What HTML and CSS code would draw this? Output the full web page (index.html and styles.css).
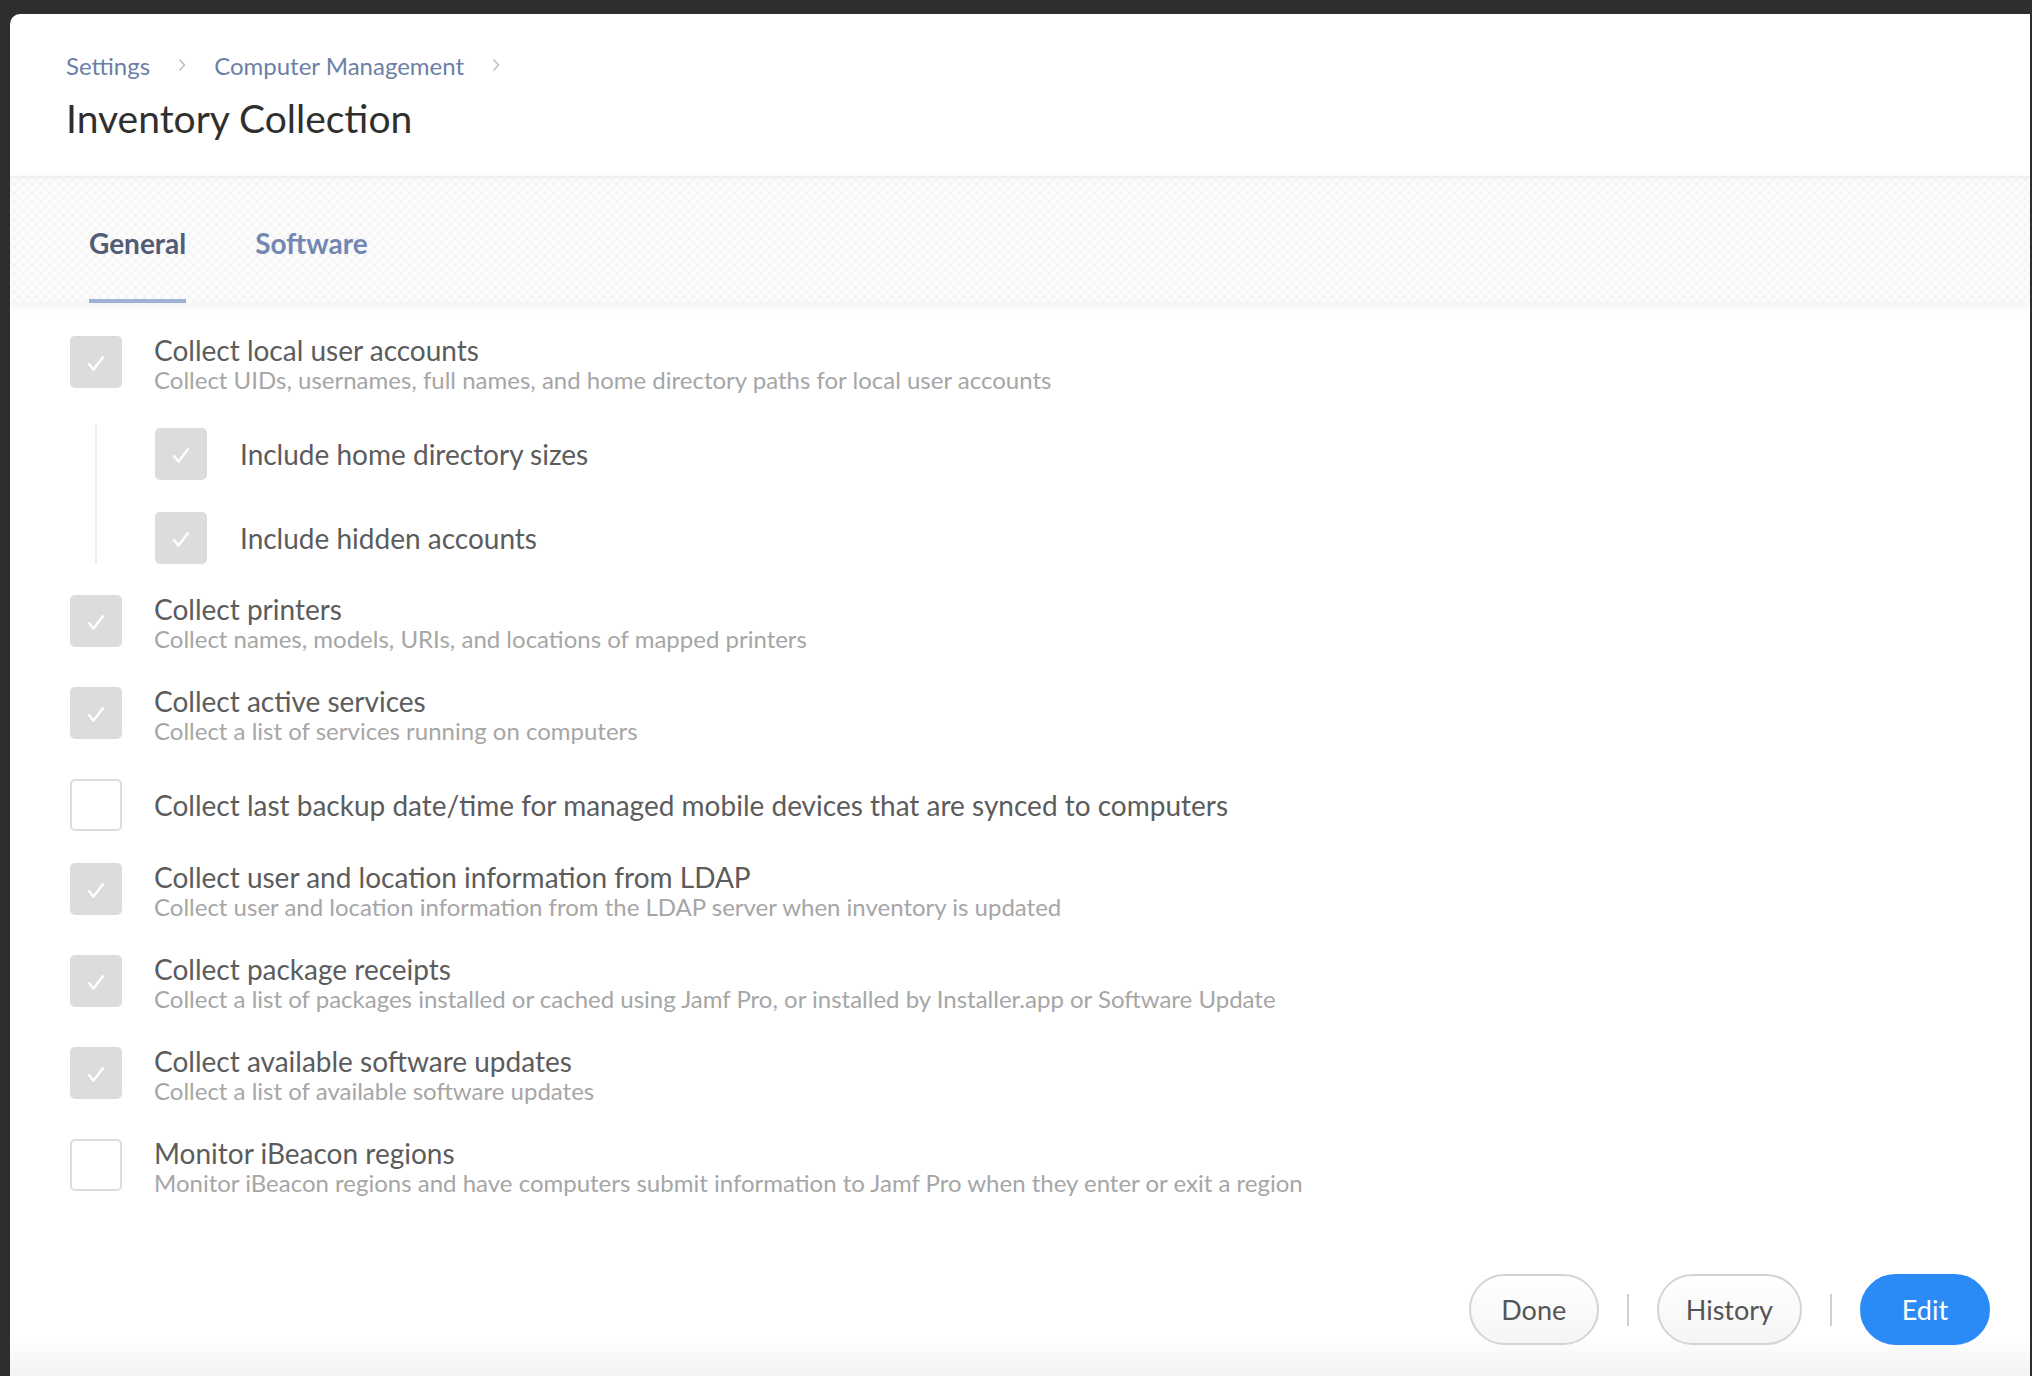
FILE: index.html
```html
<!DOCTYPE html>
<html lang="en">
<head>
  <meta charset="UTF-8">
  <title>Inventory Collection</title>
  <link rel="stylesheet" href="styles.css">
</head>
<body>
  <div class="page">
    <div class="header">
      <div class="breadcrumb">
        <a class="crumb">Settings</a>
        <svg class="chevron" width="8" height="14" viewBox="0 0 8 14"><path d="M1.5 1.5 L6.5 7 L1.5 12.5" fill="none" stroke="#b9bcc4" stroke-width="1.4"/></svg>
        <a class="crumb">Computer Management</a>
        <svg class="chevron" width="8" height="14" viewBox="0 0 8 14"><path d="M1.5 1.5 L6.5 7 L1.5 12.5" fill="none" stroke="#b9bcc4" stroke-width="1.4"/></svg>
      </div>
      <h1 class="title">Inventory Collection</h1>
    </div>

    <div class="tabs">
      <div class="tab active">General</div>
      <div class="tab">Software</div>
    </div>

    <div class="content">
      <div class="option">
        <span class="check on"><svg width="18" height="16" viewBox="0 0 18 16"><path d="M1.5 8.5 L6.5 14.5 L16.5 1.5" fill="none" stroke="#fff" stroke-width="2.4"/></svg></span>
        <div class="text">
          <div class="label">Collect local user accounts</div>
          <div class="desc">Collect UIDs, usernames, full names, and home directory paths for local user accounts</div>
        </div>
      </div>

      <div class="sub-options">
        <div class="option single">
          <span class="check on"><svg width="18" height="16" viewBox="0 0 18 16"><path d="M1.5 8.5 L6.5 14.5 L16.5 1.5" fill="none" stroke="#fff" stroke-width="2.4"/></svg></span>
          <div class="label sub">Include home directory sizes</div>
        </div>
        <div class="option single">
          <span class="check on"><svg width="18" height="16" viewBox="0 0 18 16"><path d="M1.5 8.5 L6.5 14.5 L16.5 1.5" fill="none" stroke="#fff" stroke-width="2.4"/></svg></span>
          <div class="label sub">Include hidden accounts</div>
        </div>
      </div>

      <div class="option">
        <span class="check on"><svg width="18" height="16" viewBox="0 0 18 16"><path d="M1.5 8.5 L6.5 14.5 L16.5 1.5" fill="none" stroke="#fff" stroke-width="2.4"/></svg></span>
        <div class="text">
          <div class="label">Collect printers</div>
          <div class="desc">Collect names, models, URIs, and locations of mapped printers</div>
        </div>
      </div>

      <div class="option">
        <span class="check on"><svg width="18" height="16" viewBox="0 0 18 16"><path d="M1.5 8.5 L6.5 14.5 L16.5 1.5" fill="none" stroke="#fff" stroke-width="2.4"/></svg></span>
        <div class="text">
          <div class="label">Collect active services</div>
          <div class="desc">Collect a list of services running on computers</div>
        </div>
      </div>

      <div class="option single">
        <span class="check"></span>
        <div class="label">Collect last backup date/time for managed mobile devices that are synced to computers</div>
      </div>

      <div class="option">
        <span class="check on"><svg width="18" height="16" viewBox="0 0 18 16"><path d="M1.5 8.5 L6.5 14.5 L16.5 1.5" fill="none" stroke="#fff" stroke-width="2.4"/></svg></span>
        <div class="text">
          <div class="label">Collect user and location information from LDAP</div>
          <div class="desc">Collect user and location information from the LDAP server when inventory is updated</div>
        </div>
      </div>

      <div class="option">
        <span class="check on"><svg width="18" height="16" viewBox="0 0 18 16"><path d="M1.5 8.5 L6.5 14.5 L16.5 1.5" fill="none" stroke="#fff" stroke-width="2.4"/></svg></span>
        <div class="text">
          <div class="label">Collect package receipts</div>
          <div class="desc">Collect a list of packages installed or cached using Jamf Pro, or installed by Installer.app or Software Update</div>
        </div>
      </div>

      <div class="option">
        <span class="check on"><svg width="18" height="16" viewBox="0 0 18 16"><path d="M1.5 8.5 L6.5 14.5 L16.5 1.5" fill="none" stroke="#fff" stroke-width="2.4"/></svg></span>
        <div class="text">
          <div class="label">Collect available software updates</div>
          <div class="desc">Collect a list of available software updates</div>
        </div>
      </div>

      <div class="option">
        <span class="check"></span>
        <div class="text">
          <div class="label">Monitor iBeacon regions</div>
          <div class="desc">Monitor iBeacon regions and have computers submit information to Jamf Pro when they enter or exit a region</div>
        </div>
      </div>
    </div>

    <div class="footer">
      <button class="btn">Done</button>
      <span class="divider"></span>
      <button class="btn">History</button>
      <span class="divider"></span>
      <button class="btn primary">Edit</button>
    </div>
  </div>
</body>
</html>
```

FILE: styles.css
```css
html, body {
  height: 100%;
}
body {
  margin: 0;
  background-color: #2e2e2e;
  font-family: Lato, "Open Sans", Arial, sans-serif;
  overflow: hidden;
}
.page {
  margin: 14px 2px 0 10px;
  height: 1362px;
  background-color: #fff;
  border-top-left-radius: 10px;
  display: flex;
  flex-direction: column;
  overflow: hidden;
}

/* header */
.header {
  padding: 36px 56px 36px 56px;
  position: relative;
  z-index: 2;
  box-shadow: 0 1px 3px rgba(0, 0, 0, 0.08);
}
.breadcrumb {
  display: flex;
  align-items: center;
  height: 30px;
  gap: 28px;
}
.crumb {
  color: #6c7fa6;
  font-size: 24px;
}
.chevron {
  display: block;
}
.title {
  margin: 16px 0 0 0;
  font-size: 39px;
  line-height: 44px;
  font-weight: normal;
  color: #2f2f2f;
}

/* tabs */
.tabs {
  display: flex;
  gap: 69px;
  padding-left: 79px;
  height: 127px;
  position: relative;
  z-index: 1;
  background-color: #ececec;
  background-image:
    radial-gradient(circle at 45% 40%, #ffffff 0, #f9f9f9 3px, rgba(240,240,240,0) 4.5px),
    radial-gradient(circle at 45% 40%, #ffffff 0, #f9f9f9 3px, rgba(240,240,240,0) 4.5px);
  background-size: 9px 9px, 9px 9px;
  background-position: 0 0, 4.5px 4.5px;
  box-shadow: 0 4px 10px rgba(0, 0, 0, 0.06);
}
.tab {
  padding-top: 52px;
  height: 71px;
  line-height: 30px;
  font-size: 28px;
  font-weight: bold;
  color: #7288b3;
  border-bottom: 4px solid transparent;
}
.tab.active {
  color: #515d75;
  border-bottom-color: #9db1d4;
}

/* options */
.content {
  flex: 1;
  padding: 33px 60px 0 60px;
}
.option {
  display: flex;
  align-items: flex-start;
  gap: 32px;
  margin-bottom: 32px;
}
.option.single {
  align-items: center;
}
.check {
  flex: none;
  width: 52px;
  height: 52px;
  box-sizing: border-box;
  border: 2px solid #dddddd;
  border-radius: 5px;
  background-color: #fff;
  display: flex;
  align-items: center;
  justify-content: center;
  margin-top: 0;
}
.check.on {
  background-color: #dcdcdc;
  border-color: #dcdcdc;
}
.check svg {
  margin-top: 1px;
}
.text {
  height: 60px;
}
.label {
  font-size: 28px;
  line-height: 29px;
  color: #5c5c5c;
}
.label.sub {
  margin-left: 1px;
}
.desc {
  font-size: 24px;
  line-height: 29px;
  color: #a6a6a6;
}
.sub-options {
  margin-left: 25px;
  border-left: 2px solid #ececec;
  padding-left: 58px;
  padding-top: 4px;
  margin-top: -4px;
}
.sub-options .option:last-child {
  margin-bottom: 0;
}
.sub-options + .option {
  margin-top: 31px;
}

/* footer */
.footer {
  display: flex;
  justify-content: flex-end;
  align-items: center;
  gap: 28px;
  padding: 0 40px 31px 0;
  background: linear-gradient(to bottom, #fff 0, #fff 60%, #f3f3f3 100%);
}
.btn {
  height: 71px;
  padding: 0 27px;
  min-width: 130px;
  border-radius: 36px;
  border: 2px solid #d3d4da;
  background: linear-gradient(to bottom, #fff, #f5f5f5);
  font-family: Lato, "Open Sans", Arial, sans-serif;
  font-size: 27px;
  color: #555;
  cursor: pointer;
}
.btn.primary {
  background: #2a8bf6;
  border-color: #2a8bf6;
  color: #fff;
}
.divider {
  width: 2px;
  height: 32px;
  background-color: #cfd0d6;
}
```
